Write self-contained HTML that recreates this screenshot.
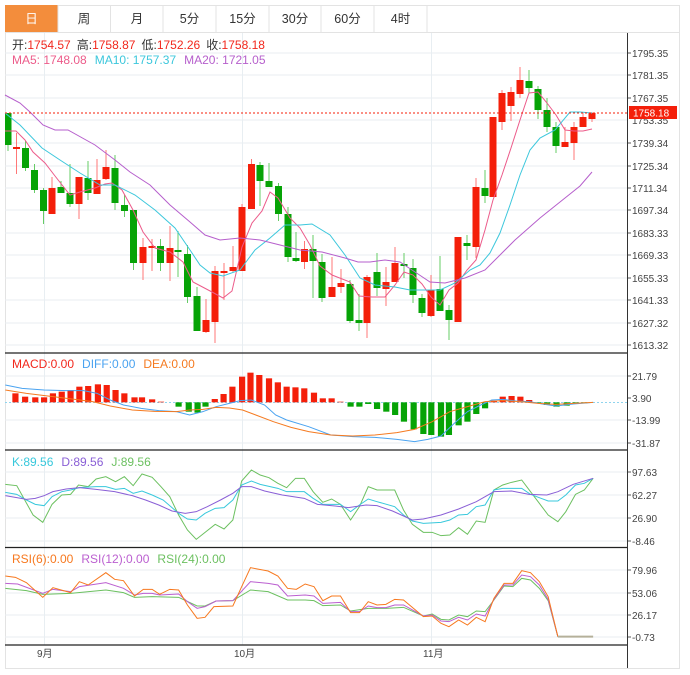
<!DOCTYPE html>
<html><head><meta charset="utf-8"><style>
body{margin:0;background:#fff;width:690px;height:675px;overflow:hidden;font-family:"Liberation Sans","Noto Sans CJK SC",sans-serif}
svg{position:absolute;left:0;top:0}
.t{font-family:"Liberation Sans","Noto Sans CJK SC",sans-serif}
</style></head><body>
<svg width="690" height="675" viewBox="0 0 690 675">
<rect x="5.5" y="5.5" width="674" height="663" fill="none" stroke="#e3e3e3"/>
<rect x="5" y="5" width="53" height="27" fill="#f38d3c"/>
<g stroke="#e3e3e3"><line x1="58" y1="5" x2="58" y2="32"/><line x1="110.5" y1="5" x2="110.5" y2="32"/><line x1="163" y1="5" x2="163" y2="32"/><line x1="216" y1="5" x2="216" y2="32"/><line x1="269" y1="5" x2="269" y2="32"/><line x1="321" y1="5" x2="321" y2="32"/><line x1="374" y1="5" x2="374" y2="32"/><line x1="427" y1="5" x2="427" y2="32"/><line x1="5" y1="32.5" x2="680" y2="32.5"/></g>
<g class="t" font-size="12.5" text-anchor="middle" fill="#333">
<text x="31.5" y="23" fill="#fff">日</text><text x="84" y="23">周</text><text x="137" y="23">月</text><text x="189.5" y="23">5分</text><text x="242.5" y="23">15分</text><text x="295" y="23">30分</text><text x="347.5" y="23">60分</text><text x="400.5" y="23">4时</text>
</g>
<g stroke="#e8eef2" stroke-width="1">
<line x1="5" y1="53" x2="627" y2="53"/><line x1="5" y1="75" x2="627" y2="75"/><line x1="5" y1="98" x2="627" y2="98"/><line x1="5" y1="120" x2="627" y2="120"/><line x1="5" y1="143" x2="627" y2="143"/><line x1="5" y1="166" x2="627" y2="166"/><line x1="5" y1="188" x2="627" y2="188"/><line x1="5" y1="210" x2="627" y2="210"/><line x1="5" y1="233" x2="627" y2="233"/><line x1="5" y1="255" x2="627" y2="255"/><line x1="5" y1="278" x2="627" y2="278"/><line x1="5" y1="300" x2="627" y2="300"/><line x1="5" y1="323" x2="627" y2="323"/><line x1="5" y1="345" x2="627" y2="345"/>
<line x1="5" y1="376" x2="627" y2="376"/><line x1="5" y1="420" x2="627" y2="420"/><line x1="5" y1="443" x2="627" y2="443"/>
<line x1="5" y1="472" x2="627" y2="472"/><line x1="5" y1="495" x2="627" y2="495"/><line x1="5" y1="518" x2="627" y2="518"/><line x1="5" y1="541" x2="627" y2="541"/>
<line x1="5" y1="570" x2="627" y2="570"/><line x1="5" y1="593" x2="627" y2="593"/><line x1="5" y1="615" x2="627" y2="615"/><line x1="5" y1="637" x2="627" y2="637"/>
<line x1="44.5" y1="33" x2="44.5" y2="645"/><line x1="242.5" y1="33" x2="242.5" y2="645"/><line x1="431.5" y1="33" x2="431.5" y2="645"/>
</g>
<g stroke="#222" stroke-width="1.2"><line x1="5" y1="353" x2="627" y2="353"/><line x1="5" y1="450" x2="627" y2="450"/><line x1="5" y1="547.5" x2="627" y2="547.5"/><line x1="5" y1="645" x2="627" y2="645"/></g>
<line x1="627.5" y1="33" x2="627.5" y2="668" stroke="#333"/>
<g stroke="#555"><line x1="628" y1="53" x2="631" y2="53"/><line x1="628" y1="75" x2="631" y2="75"/><line x1="628" y1="98" x2="631" y2="98"/><line x1="628" y1="143" x2="631" y2="143"/><line x1="628" y1="166" x2="631" y2="166"/><line x1="628" y1="188" x2="631" y2="188"/><line x1="628" y1="210" x2="631" y2="210"/><line x1="628" y1="233" x2="631" y2="233"/><line x1="628" y1="255" x2="631" y2="255"/><line x1="628" y1="278" x2="631" y2="278"/><line x1="628" y1="300" x2="631" y2="300"/><line x1="628" y1="323" x2="631" y2="323"/><line x1="628" y1="345" x2="631" y2="345"/><line x1="628" y1="376" x2="631" y2="376"/><line x1="628" y1="398" x2="631" y2="398"/><line x1="628" y1="420" x2="631" y2="420"/><line x1="628" y1="443" x2="631" y2="443"/><line x1="628" y1="472" x2="631" y2="472"/><line x1="628" y1="495" x2="631" y2="495"/><line x1="628" y1="518" x2="631" y2="518"/><line x1="628" y1="541" x2="631" y2="541"/><line x1="628" y1="570" x2="631" y2="570"/><line x1="628" y1="593" x2="631" y2="593"/><line x1="628" y1="615" x2="631" y2="615"/><line x1="628" y1="637" x2="631" y2="637"/></g>
<g class="t" font-size="10" fill="#444">
<text x="632" y="57">1795.35</text><text x="632" y="79">1781.35</text><text x="632" y="102">1767.35</text><text x="632" y="124">1753.35</text><text x="632" y="147">1739.34</text><text x="632" y="170">1725.34</text><text x="632" y="192">1711.34</text><text x="632" y="214">1697.34</text><text x="632" y="237">1683.33</text><text x="632" y="259">1669.33</text><text x="632" y="282">1655.33</text><text x="632" y="304">1641.33</text><text x="632" y="327">1627.32</text><text x="632" y="349">1613.32</text>
<text x="632" y="380">21.79</text><text x="632" y="402">3.90</text><text x="632" y="424">-13.99</text><text x="632" y="447">-31.87</text>
<text x="632" y="476">97.63</text><text x="632" y="499">62.27</text><text x="632" y="522">26.90</text><text x="632" y="545">-8.46</text>
<text x="632" y="574">79.96</text><text x="632" y="597">53.06</text><text x="632" y="619">26.17</text><text x="632" y="641">-0.73</text>
<text x="37" y="657">9月</text><text x="234" y="657">10月</text><text x="423" y="657">11月</text>
</g>
<g class="t" font-size="12">
<text x="12" y="49"><tspan fill="#333">开:</tspan><tspan fill="#f2271c">1754.57</tspan><tspan fill="#333" dx="6">高:</tspan><tspan fill="#f2271c">1758.87</tspan><tspan fill="#333" dx="6">低:</tspan><tspan fill="#f2271c">1752.26</tspan><tspan fill="#333" dx="6">收:</tspan><tspan fill="#f2271c">1758.18</tspan></text>
<text x="12" y="64"><tspan fill="#ec5b8a">MA5: 1748.08</tspan><tspan fill="#3cc7dc" dx="8">MA10: 1757.37</tspan><tspan fill="#b65fcc" dx="8">MA20: 1721.05</tspan></text>
<text x="12" y="368"><tspan fill="#f2271c">MACD:0.00</tspan><tspan fill="#4aa3f0" dx="8">DIFF:0.00</tspan><tspan fill="#f57a20" dx="8">DEA:0.00</tspan></text>
<text x="12" y="466"><tspan fill="#38c8dc">K:89.56</tspan><tspan fill="#8a5fd6" dx="8">D:89.56</tspan><tspan fill="#6cc060" dx="8">J:89.56</tspan></text>
<text x="12" y="563"><tspan fill="#f7781e">RSI(6):0.00</tspan><tspan fill="#bb5fd0" dx="8">RSI(12):0.00</tspan><tspan fill="#6cc060" dx="8">RSI(24):0.00</tspan></text>
</g>
<g stroke-width="1">
<g fill="#f41f0a" stroke="#f41f0a">
<line x1="16.5" y1="133" x2="16.5" y2="174" stroke="#f77"/><rect x="13" y="147" width="7" height="2" stroke="none"/>
<line x1="52" y1="177" x2="52" y2="214" stroke="#f77"/><rect x="48.5" y="188" width="7" height="26" stroke="none"/>
<line x1="79" y1="177" x2="79" y2="219" stroke="#f77"/><rect x="75.5" y="177" width="7" height="27" stroke="none"/>
<line x1="97" y1="159" x2="97" y2="194" stroke="#f77"/><rect x="93.5" y="180" width="7" height="14" stroke="none"/>
<line x1="106" y1="150" x2="106" y2="180" stroke="#f77"/><rect x="102.5" y="167" width="7" height="12" stroke="none"/>
<line x1="143" y1="238" x2="143" y2="280" stroke="#f77"/><rect x="139.5" y="247" width="7" height="16" stroke="none"/>
<line x1="152" y1="239" x2="152" y2="271" stroke="#f77"/><rect x="148.5" y="246" width="7" height="2" stroke="none"/>
<line x1="170" y1="226" x2="170" y2="281" stroke="#f77"/><rect x="166.5" y="248" width="7" height="15" stroke="none"/>
<line x1="206" y1="299" x2="206" y2="333" stroke="#f77"/><rect x="202.5" y="320" width="7" height="12" stroke="none"/>
<line x1="215" y1="266" x2="215" y2="343" stroke="#f77"/><rect x="211.5" y="271" width="7" height="51" stroke="none"/>
<line x1="224" y1="263" x2="224" y2="300" stroke="#f77"/><rect x="220.5" y="271" width="7" height="2" stroke="none"/>
<line x1="233" y1="246" x2="233" y2="272" stroke="#f77"/><rect x="229.5" y="267" width="7" height="4" stroke="none"/>
<line x1="242" y1="204" x2="242" y2="271" stroke="#f77"/><rect x="238.5" y="207" width="7" height="64" stroke="none"/>
<line x1="251.5" y1="159" x2="251.5" y2="209" stroke="#f77"/><rect x="248" y="164" width="7" height="45" stroke="none"/>
<line x1="304.5" y1="241" x2="304.5" y2="269" stroke="#f77"/><rect x="301" y="249" width="7" height="13" stroke="none"/>
<line x1="332" y1="257" x2="332" y2="297" stroke="#f77"/><rect x="328.5" y="287" width="7" height="10" stroke="none"/>
<line x1="341" y1="269" x2="341" y2="293" stroke="#f77"/><rect x="337.5" y="283" width="7" height="4" stroke="none"/>
<line x1="367" y1="275" x2="367" y2="338" stroke="#f77"/><rect x="363.5" y="277" width="7" height="46" stroke="none"/>
<line x1="386" y1="267" x2="386" y2="306" stroke="#f77"/><rect x="382.5" y="282" width="7" height="7" stroke="none"/>
<line x1="395" y1="247" x2="395" y2="282" stroke="#f77"/><rect x="391.5" y="263" width="7" height="19" stroke="none"/>
<line x1="431" y1="275" x2="431" y2="317" stroke="#f77"/><rect x="427.5" y="290" width="7" height="26" stroke="none"/>
<rect x="454.5" y="237" width="7" height="85" stroke="none"/>
<line x1="476" y1="178" x2="476" y2="258" stroke="#f77"/><rect x="472.5" y="187" width="7" height="60" stroke="none"/>
<rect x="489.5" y="117" width="7" height="80" stroke="none"/>
<line x1="502" y1="90" x2="502" y2="130" stroke="#f77"/><rect x="498.5" y="93" width="7" height="29" stroke="none"/>
<line x1="511" y1="87" x2="511" y2="121" stroke="#f77"/><rect x="507.5" y="92" width="7" height="14" stroke="none"/>
<line x1="520" y1="67" x2="520" y2="98" stroke="#f77"/><rect x="516.5" y="80" width="7" height="14" stroke="none"/>
<line x1="565" y1="127" x2="565" y2="147" stroke="#f77"/><rect x="561.5" y="142" width="7" height="5" stroke="none"/>
<line x1="574" y1="122" x2="574" y2="160" stroke="#f77"/><rect x="570.5" y="127" width="7" height="16" stroke="none"/>
<line x1="583" y1="113" x2="583" y2="127" stroke="#f77"/><rect x="579.5" y="117" width="7" height="10" stroke="none"/>
<line x1="592" y1="112" x2="592" y2="122" stroke="#f77"/><rect x="588.5" y="113" width="7" height="6" stroke="none"/>
</g>
<g fill="#06a306" stroke="#6c6">
<line x1="8" y1="113" x2="8" y2="151"/><rect x="5" y="113" width="6.5" height="32" stroke="none"/>
<line x1="25.5" y1="141" x2="25.5" y2="171"/><rect x="22" y="148" width="7" height="20" stroke="none"/>
<line x1="34.5" y1="164" x2="34.5" y2="193"/><rect x="31" y="170" width="7" height="20" stroke="none"/>
<line x1="43.5" y1="188" x2="43.5" y2="224"/><rect x="40" y="190" width="7" height="21" stroke="none"/>
<line x1="61" y1="181" x2="61" y2="193"/><rect x="57.5" y="187" width="7" height="6" stroke="none"/>
<line x1="70" y1="164" x2="70" y2="207"/><rect x="66.5" y="193" width="7" height="11" stroke="none"/>
<line x1="88" y1="161" x2="88" y2="200"/><rect x="84.5" y="178" width="7" height="15" stroke="none"/>
<line x1="115" y1="155" x2="115" y2="210"/><rect x="111.5" y="168" width="7" height="35" stroke="none"/>
<line x1="124.5" y1="195" x2="124.5" y2="217"/><rect x="121" y="205" width="7" height="6" stroke="none"/>
<line x1="133.5" y1="210" x2="133.5" y2="270"/><rect x="130" y="210" width="7" height="53" stroke="none"/>
<line x1="160.5" y1="239" x2="160.5" y2="271"/><rect x="157" y="246" width="7" height="17" stroke="none"/>
<line x1="178" y1="231" x2="178" y2="277"/><rect x="174.5" y="250" width="7" height="2" stroke="none"/>
<line x1="187.5" y1="245" x2="187.5" y2="303"/><rect x="184" y="254" width="7" height="43" stroke="none"/>
<line x1="197" y1="287" x2="197" y2="331"/><rect x="193.5" y="296" width="7" height="35" stroke="none"/>
<line x1="260" y1="162" x2="260" y2="206"/><rect x="256.5" y="165" width="7" height="16" stroke="none"/>
<line x1="269" y1="163" x2="269" y2="187"/><rect x="265.5" y="181" width="7" height="6" stroke="none"/>
<line x1="278.5" y1="183" x2="278.5" y2="221"/><rect x="275" y="186" width="7" height="28" stroke="none"/>
<line x1="288" y1="207" x2="288" y2="262"/><rect x="284.5" y="214" width="7" height="43" stroke="none"/>
<line x1="296" y1="232" x2="296" y2="262"/><rect x="292.5" y="258" width="7" height="3" stroke="none"/>
<line x1="313" y1="235" x2="313" y2="298"/><rect x="309.5" y="249" width="7" height="12" stroke="none"/>
<line x1="322" y1="254" x2="322" y2="302"/><rect x="318.5" y="262" width="7" height="36" stroke="none"/>
<line x1="350" y1="280" x2="350" y2="323"/><rect x="346.5" y="284" width="7" height="37" stroke="none"/>
<line x1="359" y1="294" x2="359" y2="331"/><rect x="355.5" y="320" width="7" height="3" stroke="none"/>
<line x1="377" y1="253" x2="377" y2="296"/><rect x="373.5" y="272" width="7" height="16" stroke="none"/>
<line x1="404" y1="253" x2="404" y2="278"/><rect x="400.5" y="264" width="7" height="2" stroke="none"/>
<line x1="413" y1="259" x2="413" y2="303"/><rect x="409.5" y="268" width="7" height="27" stroke="none"/>
<line x1="422" y1="294" x2="422" y2="317"/><rect x="418.5" y="298" width="7" height="15" stroke="none"/>
<line x1="440" y1="256" x2="440" y2="311"/><rect x="436.5" y="289" width="7" height="22" stroke="none"/>
<line x1="449" y1="305" x2="449" y2="340"/><rect x="445.5" y="310" width="7" height="10" stroke="none"/>
<line x1="467" y1="235" x2="467" y2="260"/><rect x="463.5" y="243" width="7" height="3" stroke="none"/>
<line x1="485" y1="170" x2="485" y2="203"/><rect x="481.5" y="188" width="7" height="8" stroke="none"/>
<line x1="529" y1="70" x2="529" y2="93"/><rect x="525.5" y="81" width="7" height="7" stroke="none"/>
<line x1="538" y1="86" x2="538" y2="119"/><rect x="534.5" y="89" width="7" height="21" stroke="none"/>
<line x1="547" y1="98" x2="547" y2="132"/><rect x="543.5" y="110" width="7" height="17" stroke="none"/>
<line x1="556" y1="122" x2="556" y2="153"/><rect x="552.5" y="127" width="7" height="19" stroke="none"/>
</g>
</g>
<g fill="none" stroke-width="1">
<polyline stroke="#ec5b8a" points="5,131 16,131 25,140 33,152 45,163 55,176 70,195 80,192 95,188 105,184 112,183 122,190 133,210 143,232 155,248 170,252 183,262 193,282 212,292 223,298 232,291 242,247 252,223 262,211 270,192 278,198 290,218 300,228 310,245 320,266 332,275 350,282 359,296 372,297 385,297 395,285 404,272 413,275 422,284 431,297 440,305 449,290 458,283 467,270 476,260 485,230 493,200 502,175 511,148 520,120 529,93 538,92 547,103 556,115 565,130 574,131 583,131 592,129"/>
<polyline stroke="#3cc7dc" points="5,113 20,125 42,148 60,160 80,173 100,185 115,185 135,195 155,210 175,228 190,250 200,265 210,273 223,276 240,270 255,250 270,238 285,225 300,225 312,224 330,235 345,255 360,278 375,285 395,287 410,290 440,290 455,283 470,270 480,265 490,253 500,233 510,205 520,175 530,150 540,138 555,130 570,112 580,112 592,113"/>
<polyline stroke="#b65fcc" points="5,95 20,103 30,112 43,125 55,130 68,130 95,145 115,160 130,172 150,185 170,205 190,222 205,235 220,240 240,238 260,240 280,245 300,250 322,252 345,258 358,262 370,262 385,260 400,262 415,272 430,282 445,283 465,278 485,270 500,255 515,240 540,218 560,202 580,186 592,172"/>
</g>
<line x1="5" y1="113" x2="627" y2="113" stroke="#f41f0a" stroke-dasharray="2,2"/>
<rect x="629" y="106" width="48" height="13" fill="#f41f0a"/>
<text x="633" y="116.5" class="t" font-size="10" fill="#fff">1758.18</text>
<line x1="5" y1="402.5" x2="627" y2="402.5" stroke="#8fd4ee" stroke-dasharray="2,2"/>
<g transform="translate(0,340) scale(0.441,0.33333)">
<g fill="#f41f0a">
<rect x="28" y="160" width="14" height="27"/><rect x="50" y="170" width="14" height="17"/><rect x="73" y="172" width="14" height="15"/><rect x="93" y="172" width="14" height="15"/><rect x="113" y="160" width="14" height="27"/><rect x="133" y="155" width="14" height="32"/><rect x="153" y="150" width="14" height="37"/><rect x="173" y="140" width="14" height="47"/><rect x="193" y="138" width="14" height="49"/><rect x="215" y="133" width="14" height="54"/><rect x="235" y="135" width="14" height="52"/><rect x="255" y="150" width="14" height="37"/><rect x="275" y="160" width="14" height="27"/><rect x="298" y="172" width="14" height="15"/><rect x="315" y="172" width="14" height="15"/><rect x="338" y="178" width="14" height="9"/><rect x="358" y="185" width="14" height="2"/>
<rect x="480" y="177" width="14" height="10"/><rect x="500" y="162" width="14" height="25"/><rect x="520" y="140" width="14" height="47"/><rect x="542" y="110" width="14" height="77"/><rect x="561" y="98" width="14" height="89"/><rect x="581" y="105" width="14" height="82"/><rect x="603" y="115" width="14" height="72"/><rect x="623" y="127" width="14" height="60"/><rect x="643" y="140" width="14" height="47"/><rect x="663" y="142" width="14" height="45"/><rect x="683" y="145" width="14" height="42"/><rect x="705" y="158" width="14" height="29"/><rect x="725" y="175" width="14" height="12"/><rect x="745" y="175" width="14" height="12"/><rect x="765" y="185" width="14" height="2"/>
<rect x="1113" y="182" width="14" height="5"/><rect x="1133" y="170" width="14" height="17"/><rect x="1153" y="168" width="14" height="19"/><rect x="1173" y="170" width="14" height="17"/><rect x="1193" y="180" width="14" height="7"/>
</g>
<g fill="#06a306">
<rect x="398" y="187" width="14" height="13"/><rect x="421" y="187" width="14" height="28"/><rect x="441" y="187" width="14" height="31"/><rect x="459" y="187" width="14" height="13"/>
<rect x="788" y="187" width="14" height="13"/><rect x="808" y="187" width="14" height="13"/><rect x="828" y="187" width="14" height="5"/><rect x="848" y="187" width="14" height="20"/><rect x="869" y="187" width="14" height="28"/><rect x="889" y="187" width="14" height="38"/><rect x="909" y="187" width="14" height="58"/><rect x="931" y="187" width="14" height="81"/><rect x="953" y="187" width="14" height="95"/><rect x="971" y="187" width="14" height="98"/><rect x="993" y="187" width="14" height="103"/><rect x="1011" y="187" width="14" height="98"/><rect x="1033" y="187" width="14" height="69"/><rect x="1053" y="187" width="14" height="58"/><rect x="1073" y="187" width="14" height="35"/><rect x="1093" y="187" width="14" height="18"/>
<rect x="1213" y="187" width="14" height="3"/><rect x="1233" y="187" width="14" height="8"/><rect x="1255" y="187" width="14" height="13"/><rect x="1278" y="187" width="14" height="10"/><rect x="1298" y="187" width="14" height="5"/><rect x="1318" y="187" width="14" height="3"/>
</g>
<g fill="none">
<polyline vector-effect="non-scaling-stroke" stroke="#4aa3f0" points="12,135 50,145 100,150 150,152 190,152 220,160 250,180 280,195 320,205 360,212 400,215 430,225 460,215 490,200 520,190 545,182 570,180 600,195 625,225 650,240 700,260 750,285 800,290 850,292 900,298 940,305 970,298 1000,288 1030,250 1060,215 1090,195 1115,180 1140,178 1170,183 1200,185 1230,192 1260,198 1300,192 1345,187"/>
<polyline vector-effect="non-scaling-stroke" stroke="#f57a20" points="12,150 60,160 120,170 170,178 210,185 250,198 300,210 350,214 400,215 430,210 460,208 490,202 520,204 550,210 580,225 620,245 660,262 700,275 750,285 800,288 850,285 900,278 940,268 980,245 1020,215 1060,200 1100,185 1140,182 1180,185 1220,190 1260,193 1300,190 1345,187"/>
</g>
</g>
<g transform="translate(0,445) scale(0.441,0.33333)" fill="none">
<polyline vector-effect="non-scaling-stroke" stroke="#6cc060" points="12,118 38,122 75,210 97,232 118,178 140,150 160,148 178,120 200,125 218,102 240,95 262,110 282,95 302,122 322,87 345,97 365,125 385,155 405,210 425,255 445,283 465,262 488,238 508,252 528,225 548,108 570,75 590,90 610,98 630,115 650,128 670,100 690,100 710,140 732,172 752,162 772,178 795,225 815,185 835,125 855,135 895,135 915,195 935,238 960,262 980,262 1000,272 1020,270 1040,248 1060,268 1080,228 1100,232 1120,135 1140,120 1160,112 1183,105 1203,140 1223,175 1243,210 1265,230 1283,200 1305,148 1325,135 1345,100"/>
<polyline vector-effect="non-scaling-stroke" stroke="#38c8dc" points="12,142 38,148 60,165 80,178 100,182 118,155 140,140 160,135 180,128 218,125 240,125 262,133 282,130 302,145 322,138 345,150 370,165 405,205 425,222 445,225 465,205 488,190 508,188 528,165 548,120 570,108 590,118 630,130 650,140 690,140 710,160 732,178 772,178 795,200 815,180 835,162 855,170 895,185 915,210 935,228 960,235 1000,232 1020,225 1040,210 1060,208 1080,185 1100,180 1120,135 1140,130 1183,130 1203,148 1223,158 1243,168 1265,168 1283,150 1305,120 1325,115 1345,100"/>
<polyline vector-effect="non-scaling-stroke" stroke="#8a5fd6" points="12,152 38,158 60,163 80,160 100,152 120,140 150,132 180,128 218,133 260,140 300,152 330,165 360,180 390,198 420,205 445,200 470,185 500,165 528,145 548,125 570,125 600,138 640,150 690,160 720,178 760,183 790,188 830,180 855,182 890,198 935,225 960,222 1000,210 1040,192 1080,170 1120,140 1160,138 1200,148 1240,150 1265,140 1300,118 1345,100"/>
</g>
<g transform="translate(0,540) scale(0.441,0.33333)" fill="none">
<polyline vector-effect="non-scaling-stroke" stroke="#6cc060" points="12,145 60,152 97,163 160,160 240,150 280,158 305,172 345,170 405,172 447,198 465,198 490,183 528,182 568,150 608,155 652,180 692,180 712,182 732,197 772,195 795,213 835,205 875,205 915,202 960,228 980,222 1000,238 1018,240 1040,225 1060,230 1080,213 1100,215 1120,180 1143,138 1163,140 1183,115 1203,120 1223,145 1243,182 1265,290"/>
<polyline vector-effect="non-scaling-stroke" stroke="#bb5fd0" points="12,130 40,132 97,160 120,148 160,155 180,140 240,128 280,145 305,165 325,160 345,160 362,165 405,162 425,185 447,205 465,200 490,183 528,182 568,125 608,130 630,135 652,168 692,165 712,168 732,190 772,187 795,215 815,215 835,198 855,203 875,203 895,195 915,195 960,228 980,225 1000,243 1018,245 1040,232 1060,240 1080,222 1100,228 1120,178 1143,135 1163,135 1183,105 1203,110 1223,135 1243,178 1265,290"/>
<polyline vector-effect="non-scaling-stroke" stroke="#f7781e" points="12,108 35,112 60,128 97,172 120,143 160,158 180,125 200,135 240,98 260,118 280,122 305,168 325,148 345,148 362,163 385,148 405,150 425,195 447,235 465,232 485,200 528,198 548,140 568,83 608,93 630,108 652,145 672,148 692,132 712,140 732,182 752,168 772,168 795,218 815,218 835,185 855,195 875,193 895,178 915,180 960,230 980,228 1000,250 1018,260 1040,240 1060,255 1080,232 1100,245 1120,175 1143,130 1163,130 1183,92 1203,98 1223,125 1243,170 1265,290"/>
<polyline vector-effect="non-scaling-stroke" stroke="#b5b09a" stroke-width="2" points="1265,290 1345,290"/>
</g>
</svg>
</body></html>
